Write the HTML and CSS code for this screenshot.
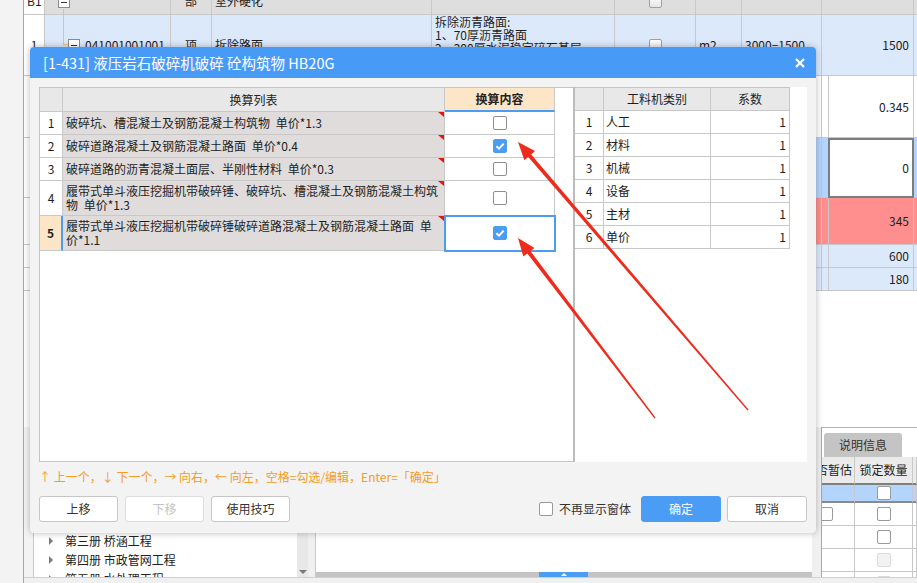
FILE: index.html
```html
<!DOCTYPE html>
<html lang="zh-CN">
<head>
<meta charset="utf-8">
<title>换算</title>
<link rel="stylesheet" href="styles.css">
</head>
<body>
<div class="app">
  <aside class="side"></aside>
  <main class="main">
    <section class="grid">
      <div class="row r0">
        <div class="c cn">B1</div>
        <div class="c tree"><span class="mbox"></span><span class="tl0"></span></div>
        <div class="c ctr">部</div>
        <div class="c">室外硬化</div>
        <div class="c"></div>
        <div class="c ctr"><span class="gcb"></span></div>
        <div class="c"></div><div class="c"></div><div class="c"></div><div class="c"></div><div class="c"></div>
      </div>
      <div class="row r1">
        <div class="c cn ctr">1</div>
        <div class="c tree"><span class="tl1"></span><span class="mbox"></span>041001001001</div>
        <div class="c ctr">项</div>
        <div class="c">拆除路面</div>
        <div class="c desc">拆除沥青路面:<br>1、70厚沥青路面<br>2、200厚水泥稳定碎石基层</div>
        <div class="c ctr"><span class="gcb"></span></div>
        <div class="c">m2</div>
        <div class="c">3000−1500</div>
        <div class="c"></div>
        <div class="c rt">1500</div>
        <div class="c"></div>
      </div>
      <div class="row r2">
        <div class="c"></div><div class="c"></div><div class="c"></div><div class="c"></div><div class="c"></div><div class="c"></div><div class="c"></div><div class="c"></div><div class="c"></div>
        <div class="c rt">0.345</div>
        <div class="c"></div>
      </div>
      <div class="row r3">
        <div class="c"></div><div class="c"></div><div class="c"></div><div class="c"></div><div class="c"></div><div class="c"></div><div class="c"></div><div class="c"></div><div class="c"></div>
        <div class="c rt cur">0</div>
        <div class="c"></div>
      </div>
      <div class="row r4">
        <div class="c"></div><div class="c"></div><div class="c"></div><div class="c"></div><div class="c"></div><div class="c"></div><div class="c"></div><div class="c"></div><div class="c"></div>
        <div class="c rt">345</div>
        <div class="c"></div>
      </div>
      <div class="row r5">
        <div class="c"></div><div class="c"></div><div class="c"></div><div class="c"></div><div class="c"></div><div class="c"></div><div class="c"></div><div class="c"></div><div class="c"></div>
        <div class="c rt">600</div>
        <div class="c"></div>
      </div>
      <div class="row r6">
        <div class="c"></div><div class="c"></div><div class="c"></div><div class="c"></div><div class="c"></div><div class="c"></div><div class="c"></div><div class="c"></div><div class="c"></div>
        <div class="c rt">180</div>
        <div class="c"></div>
      </div>
    </section>

    <section class="bottom">
      <div class="gapl"></div>
      <div class="tree-panel">
        <div class="tree-list">
          <div class="ti"><span class="tri"></span>第三册 桥涵工程</div>
          <div class="ti"><span class="tri"></span>第四册 市政管网工程</div>
          <div class="ti"><span class="tri"></span>第五册 水处理工程</div>
        </div>
        <div class="vscroll"><span class="down"></span></div>
      </div>
      <div class="gapm"></div>
      <div class="mid">
        <div class="mid-content"></div>
        <div class="hscroll"><span class="thumb"><span class="up"></span></span></div>
      </div>
      <div class="gapr"></div>
      <div class="rpanel">
        <div class="tabs"><span class="tab">说明信息</span></div>
        <div class="bt-row bt-head">
          <div class="bc first">是否暂估</div>
          <div class="bc">锁定数量</div>
          <div class="bc"></div>
        </div>
        <div class="bt-row bt-sel">
          <div class="bc"></div>
          <div class="bc"><span class="bcb"></span></div>
          <div class="bc"></div>
        </div>
        <div class="bt-row">
          <div class="bc left"><span class="bcb"></span></div>
          <div class="bc"><span class="bcb"></span></div>
          <div class="bc"></div>
        </div>
        <div class="bt-row">
          <div class="bc"></div>
          <div class="bc"><span class="bcb"></span></div>
          <div class="bc"></div>
        </div>
        <div class="bt-row">
          <div class="bc"></div>
          <div class="bc"><span class="bcb dis"></span></div>
          <div class="bc"></div>
        </div>
        <div class="bt-row">
          <div class="bc"></div>
          <div class="bc"><span class="bcb dis"></span></div>
          <div class="bc"></div>
        </div>
      </div>
    </section>
    <div class="status"></div>
  </main>
</div>

<div class="dialog">
  <div class="dlg-title">
    <span>[1-431] 液压岩石破碎机破碎 砼构筑物 HB20G</span>
    <svg class="dlg-close" viewBox="0 0 10 10"><path d="M1 1L9 9M9 1L1 9" stroke="#fff" stroke-width="2.2" fill="none"/></svg>
  </div>
  <div class="dlg-body">
    <div class="panes">
      <div class="pane-left">
        <div class="lt-row lt-head">
          <div class="lc"></div>
          <div class="lc">换算列表</div>
          <div class="lc hl">换算内容</div>
        </div>
        <div class="lt-row lt-r">
          <div class="lc num">1</div>
          <div class="lc txt">破碎坑、槽混凝土及钢筋混凝土构筑物 单价*1.3<span class="mark"></span></div>
          <div class="lc chk"><span class="cbx"></span></div>
        </div>
        <div class="lt-row lt-r">
          <div class="lc num">2</div>
          <div class="lc txt">破碎道路混凝土及钢筋混凝土路面 单价*0.4<span class="mark"></span></div>
          <div class="lc chk"><span class="cbx on"><svg viewBox="0 0 12 12"><path d="M2.4 6.3L5 8.7L9.7 3.6" stroke="#fff" stroke-width="2" fill="none"/></svg></span></div>
        </div>
        <div class="lt-row lt-r">
          <div class="lc num">3</div>
          <div class="lc txt">破碎道路的沥青混凝土面层、半刚性材料 单价*0.3<span class="mark"></span></div>
          <div class="lc chk"><span class="cbx"></span></div>
        </div>
        <div class="lt-row lt-r tall">
          <div class="lc num">4</div>
          <div class="lc txt">履带式单斗液压挖掘机带破碎锤、破碎坑、槽混凝土及钢筋混凝土构筑物 单价*1.3<span class="mark"></span></div>
          <div class="lc chk"><span class="cbx"></span></div>
        </div>
        <div class="lt-row lt-r tall">
          <div class="lc num act">5</div>
          <div class="lc txt">履带式单斗液压挖掘机带破碎锤破碎道路混凝土及钢筋混凝土路面 单价*1.1<span class="mark"></span></div>
          <div class="lc chk act"><span class="cbx on"><svg viewBox="0 0 12 12"><path d="M2.4 6.3L5 8.7L9.7 3.6" stroke="#fff" stroke-width="2" fill="none"/></svg></span></div>
        </div>
      </div>
      <div class="pane-right">
        <div class="rtab">
          <div class="rt-row rt-head">
            <div class="rc"></div>
            <div class="rc">工料机类别</div>
            <div class="rc">系数</div>
          </div>
          <div class="rt-row"><div class="rc n">1</div><div class="rc">人工</div><div class="rc v">1</div></div>
          <div class="rt-row"><div class="rc n">2</div><div class="rc">材料</div><div class="rc v">1</div></div>
          <div class="rt-row"><div class="rc n">3</div><div class="rc">机械</div><div class="rc v">1</div></div>
          <div class="rt-row"><div class="rc n">4</div><div class="rc">设备</div><div class="rc v">1</div></div>
          <div class="rt-row"><div class="rc n">5</div><div class="rc">主材</div><div class="rc v">1</div></div>
          <div class="rt-row"><div class="rc n">6</div><div class="rc">单价</div><div class="rc v">1</div></div>
        </div>
      </div>
    </div>
    <div class="hint">↑ 上一个，↓ 下一个，→ 向右，← 向左，空格=勾选/编辑，Enter=「确定」</div>
    <div class="actions">
      <button class="btn">上移</button>
      <button class="btn dis">下移</button>
      <button class="btn">使用技巧</button>
      <span class="spacer"></span>
      <label class="nomore"><span class="cbx"></span>不再显示窗体</label>
      <button class="btn pri">确定</button>
      <button class="btn cancel">取消</button>
    </div>
  </div>
</div>

<svg class="arrows" width="917" height="583" viewBox="0 0 917 583">
  <polygon points="518,142 524.4,160.3 528.2,157 747.5,410.4 748.5,409.6 531.2,154.4 535,151.1" fill="#ee2c1c"/>
  <polygon points="518,238 523.3,256.5 527.3,253.5 654.5,418.4 655.5,417.6 530.5,251.1 534.5,248.1" fill="#ee2c1c"/>
</svg>
</body>
</html>
```

FILE: styles.css
```css
* { box-sizing: border-box; margin: 0; padding: 0; }
html, body { width: 917px; height: 583px; overflow: hidden; }
body {
  position: relative;
  background: #f3f3f3;
  font-family: "Noto Sans CJK SC", "Noto Sans", sans-serif;
  font-size: 12px;
  line-height: 14px;
  color: #1e1e1e;
}

.app { display: flex; height: 583px; }
.side { flex: none; width: 24px; background: #f3f3f3; border-right: 1px solid #a8a8a8; }
.main { flex: 1; min-width: 0; display: flex; flex-direction: column; }

/* background grid */
.grid { flex: none; height: 427px; background: #fff; overflow: hidden; }
.row { display: grid; grid-template-columns: 21px 126px 41px 220px 183px 81px 46px 80px 6px 86px 1fr; }
.c {
  position: relative;
  display: flex;
  align-items: center;
  padding: 0 3px;
  border-right: 1px solid #c8c8c8;
  border-bottom: 1px solid #c8c8c8;
  overflow: hidden;
  white-space: nowrap;
}
.row > .c:first-child { background: #fff; }
.ctr { justify-content: center; padding-left: 0; padding-right: 0; }
.rt { justify-content: flex-end; padding-right: 4px; }
.r0 { height: 15px; }
.r0 .c { background: #dedede; align-items: flex-end; padding-bottom: 6px; }
.r0 .cn { background: #fff; }
.r0 .tree { padding-left: 13px; }
.r1 { height: 61px; }
.r1 .c { background: #dce9fb; }
.r1 .cn { background: #fff; }
.r1 .tree { padding-left: 23px; }
.r2 { height: 62px; }
.r3 { height: 60px; background: #b3d4fc; }
.r3 .cur { background: #fff; outline: 2px solid #7d7d7d; outline-offset: -2px; }
.r4 { height: 47px; background: #ff8f8f; }
.r5, .r6 { height: 23px; background: #dce9fb; }
.desc { align-items: flex-start; white-space: normal; line-height: 13px; }

.mbox {
  flex: none;
  width: 12px; height: 12px;
  margin-right: 5px;
  border: 1px solid #8a8a8a;
  background: #fff;
  display: flex; align-items: center; justify-content: center;
  position: relative; z-index: 1;
}
.mbox::before { content: ""; width: 6px; height: 1px; background: #333; }
.tl0 { position: absolute; left: 18px; top: 9px; bottom: -1px; border-left: 1px solid #f5be6e; }
.tl1 { position: absolute; left: 18px; top: 0; width: 6px; height: 30px; border-left: 1px solid #f5be6e; border-bottom: 1px solid #f5be6e; }
.gcb {
  width: 13px; height: 13px;
  border: 1px solid #a0a0a0;
  border-radius: 2px;
  background: linear-gradient(#ffffff, #e6e6e6);
}

/* bottom area */
.bottom { flex: none; height: 150px; display: flex; }
.gapl { flex: none; width: 9px; background: #f3f3f3; }
.tree-panel { flex: none; width: 275px; display: flex; background: #fff; border-left: 1px solid #c8c8c8; }
.tree-list { flex: 1; padding-top: 104px; overflow: hidden; }
.ti { height: 19px; display: flex; align-items: center; padding-left: 15px; white-space: nowrap; color: #222; }
.tri { width: 0; height: 0; border-left: 4px solid #7c7c7c; border-top: 4px solid transparent; border-bottom: 4px solid transparent; margin-right: 12px; }
.vscroll { flex: none; width: 11px; background: #e8e8e8; display: flex; align-items: flex-end; justify-content: center; padding-bottom: 3px; }
.down { width: 0; height: 0; border-top: 4px solid #7a7a7a; border-left: 4px solid transparent; border-right: 4px solid transparent; }
.gapm { flex: none; width: 7px; background: #f0f0f0; }
.mid { flex: none; width: 497px; background: #fff; border-left: 1px solid #c8c8c8; display: flex; flex-direction: column; }
.mid-content { flex: 1; }
.hscroll { flex: none; height: 5px; background: #c4c4c4; display: flex; }
.thumb { margin-left: 223px; width: 49px; height: 5px; background: #4a9cf5; display: flex; justify-content: center; align-items: center; }
.up { width: 0; height: 0; border-bottom: 3px solid #fff; border-left: 3px solid transparent; border-right: 3px solid transparent; }
.gapr { flex: none; width: 10px; background: #f0f0f0; border-right: 1px solid #a8a8a8; }
.rpanel { flex: 1; min-width: 0; background: #fff; display: flex; flex-direction: column; overflow: hidden; }
.tabs { flex: none; height: 30px; border-top: 1px solid #b4b4b4; padding: 5px 0 0 2px; display: flex; }
.tab { width: 78px; height: 24px; background: #c4c4c4; border-radius: 3px 3px 0 0; display: flex; align-items: center; justify-content: center; color: #3a3128; }
.bt-row { flex: none; display: grid; grid-template-columns: 33px 58px 1fr; height: 23px; }
.bc { display: flex; align-items: center; justify-content: center; border-right: 1px solid #c8c8c8; border-bottom: 1px solid #c8c8c8; overflow: hidden; white-space: nowrap; }
.bt-head { height: 28px; background: #ebebeb; }
.bt-head .bc { border-bottom: 2px solid #7f7f7f; }
.bt-head .first { justify-content: flex-end; padding-right: 2px; }
.bt-sel { height: 18px; background: #b3d4fc; }
.bt-sel .bc { border-bottom: 2px solid #8a8a8a; }
.bc.left { justify-content: flex-start; }
.bc.left .bcb { margin-left: -3px; }
.bcb { flex: none; width: 14px; height: 14px; border: 1px solid #9a9a9a; border-radius: 2px; background: #fff; }
.bcb.dis { background: #f2f2f2; border-color: #dadada; }
.status { flex: none; height: 6px; background: #f0f0f0; border-top: 1px solid #d0d0d0; }

/* dialog */
.dialog {
  position: absolute;
  left: 30px; top: 47px;
  width: 786px; height: 486px;
  background: #f3f3f3;
  border-radius: 4px;
  box-shadow: 0 0 7px rgba(0, 0, 0, 0.28);
  z-index: 5;
  display: flex; flex-direction: column;
}
.dlg-title {
  flex: none;
  height: 31px;
  background: #479bf6;
  border-radius: 4px 4px 0 0;
  color: #fff;
  font-size: 14.5px;
  display: flex; align-items: center; justify-content: space-between;
  padding: 0 11px 0 13px;
}
.dlg-close { width: 10px; height: 10px; display: block; }
.dlg-body { flex: 1; padding: 9px 9px 11px; display: flex; flex-direction: column; }
.panes { flex: none; height: 375px; display: flex; }
.pane-left { flex: none; width: 534px; background: #fff; border: 1px solid #c4c4c4; border-right: none; }
.pane-right { flex: 1; background: #fff; border-left: 2px solid #bcbcbc; }

.lt-row { display: grid; grid-template-columns: 23px 382px 110px; }
.lc { position: relative; display: flex; align-items: center; border-right: 1px solid #c8c8c8; border-bottom: 1px solid #c8c8c8; }
.lt-head { height: 24px; }
.lt-head .lc { background: #e8e8e8; justify-content: center; color: #222; }
.lt-head .hl { background: #fde6c8; font-weight: 700; border-bottom: 2px solid #4a9cf5; color: #222; }
.lt-r { height: 23px; }
.lt-r.tall { height: 35px; }
.num { justify-content: center; background: #fff; }
.txt { background: #e0dcdb; padding: 0 4px 0 3px; word-spacing: 3px; }
.chk { justify-content: center; background: #fff; }
.num.act { background: #fde6c8; font-weight: 700; border-right: 2px solid #4a9cf5; }
.chk.act { outline: 2px solid #4a9cf5; outline-offset: -1px; z-index: 1; }
.mark { position: absolute; top: 0; right: 0; width: 0; height: 0; border-top: 5px solid #e8150c; border-left: 6px solid transparent; }

.cbx { flex: none; display: inline-flex; align-items: center; justify-content: center; width: 14px; height: 14px; border: 1px solid #8f8f8f; border-radius: 2px; background: #fff; }
.cbx.on { background: #4a9cf5; border-color: #4a9cf5; }
.cbx svg { width: 12px; height: 12px; display: block; }

.rtab { width: 215px; border-top: 1px solid #c4c4c4; }
.rt-row { display: grid; grid-template-columns: 29px 107px 79px; height: 23px; }
.rc { display: flex; align-items: center; padding: 0 2px; border-right: 1px solid #c8c8c8; border-bottom: 1px solid #c8c8c8; }
.rt-head .rc { background: #e8e8e8; justify-content: center; }
.rc.n { justify-content: center; }
.rc.v { justify-content: flex-end; padding-right: 3px; }

.hint { flex: none; margin-top: 5px; height: 20px; line-height: 20px; color: #f59b26; white-space: nowrap; }
.actions { flex: none; margin-top: 9px; height: 26px; display: flex; align-items: center; }
.btn {
  flex: none;
  width: 79px; height: 26px;
  margin-right: 7px;
  border: 1px solid #c6c6c6;
  border-radius: 3px;
  background: #fff;
  font: inherit;
  color: #333;
  display: flex; align-items: center; justify-content: center;
}
.btn.dis { color: #c4c4c4; border-color: #dcdcdc; }
.spacer { flex: 1; }
.nomore { display: flex; align-items: center; margin-right: 10px; color: #333; }
.nomore .cbx { margin-right: 6px; border-color: #999; }
.btn.pri { width: 80px; margin-right: 6px; background: #4a9cf5; border-color: #4a9cf5; color: #fff; }
.btn.cancel { width: 80px; margin-right: 0; }

.arrows { position: absolute; left: 0; top: 0; z-index: 10; pointer-events: none; }
```
